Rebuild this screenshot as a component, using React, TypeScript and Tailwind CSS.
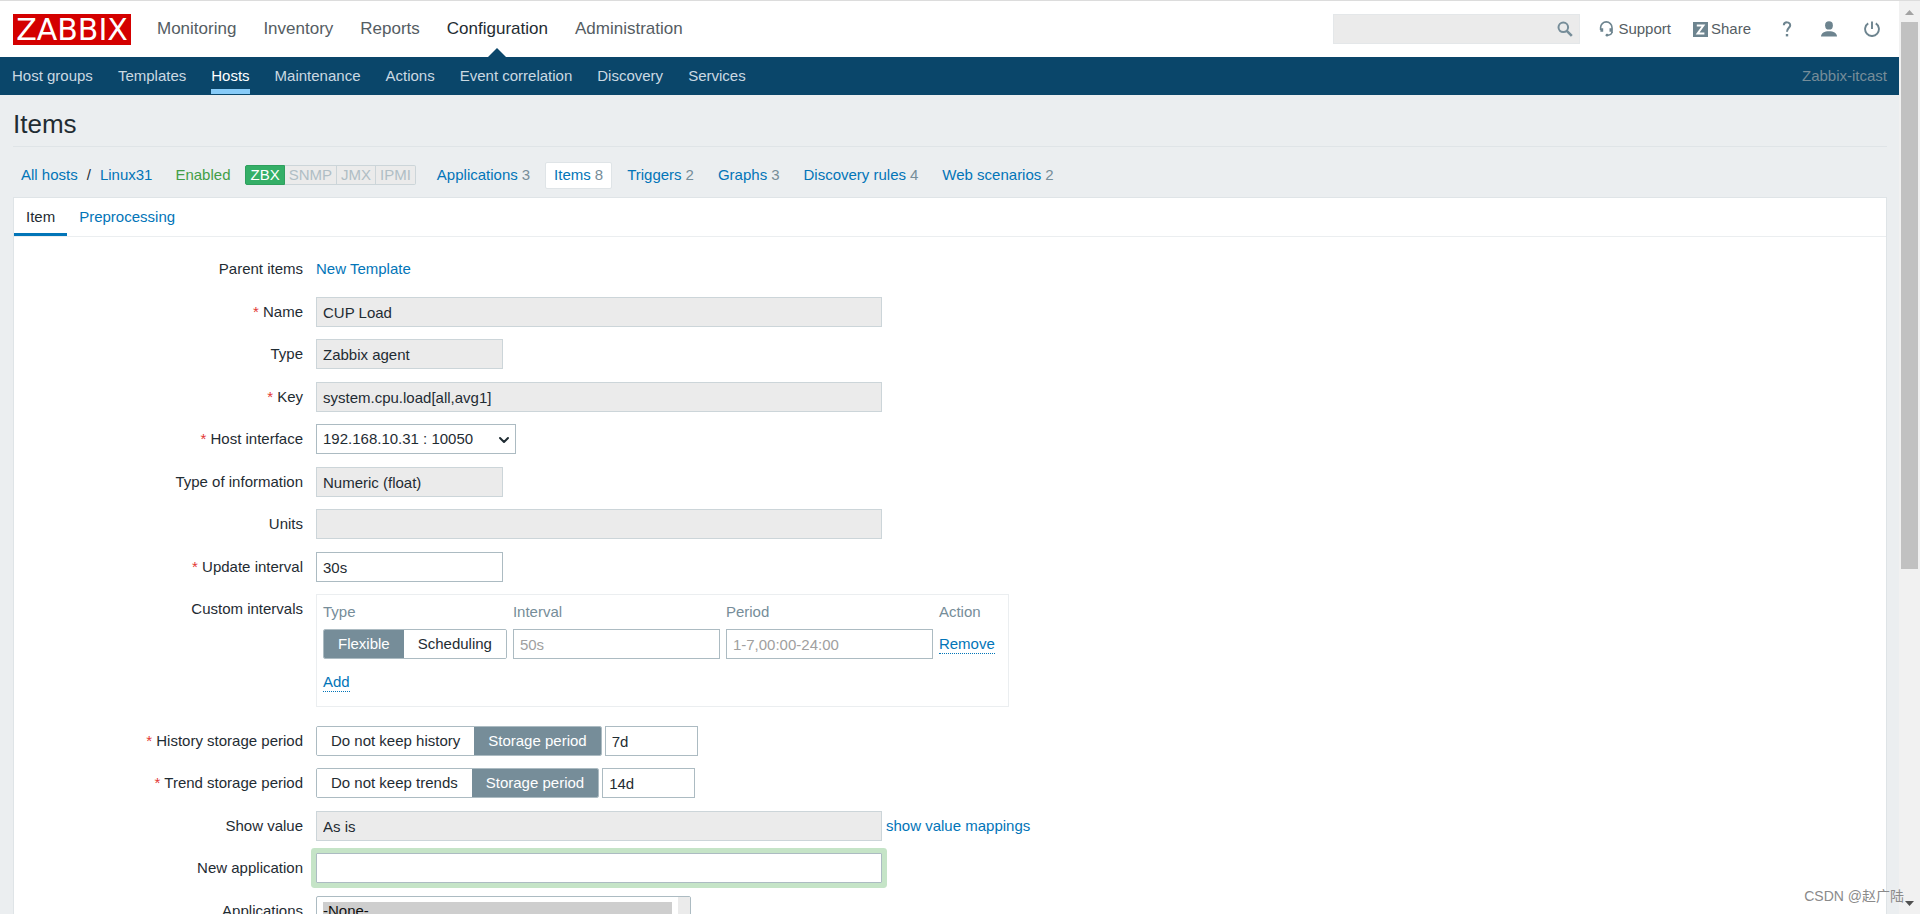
import type { ReactNode } from "react";
import { ChevronDown } from "lucide-react";

const mainNav = ["Monitoring", "Inventory", "Reports", "Configuration", "Administration"];
const subNav = ["Host groups", "Templates", "Hosts", "Maintenance", "Actions", "Event correlation", "Discovery", "Services"];
const hostLinks = [
  { name: "Applications", count: 3 },
  { name: "Items", count: 8 },
  { name: "Triggers", count: 2 },
  { name: "Graphs", count: 3 },
  { name: "Discovery rules", count: 4 },
  { name: "Web scenarios", count: 2 },
];

const inputClass = "h-[30px] border border-[#acbbc2] bg-white px-[6px] placeholder:text-[#a0a0a0] outline-none";
const readonlyClass = "h-[30px] border border-[#ccd5d9] bg-[#ebebeb] px-[6px] outline-none";
const linkClass = "text-[#0275b8]";

function Header() {
  return (
    <header>
      <div className="flex h-[57px] items-center justify-between border-t border-[#dcdcdc] bg-white pr-[19px] pl-[13px]">
        <div className="flex h-full items-center">
          <a href="#" className="flex h-[31px] w-[118px] items-center justify-center bg-[#d40000] font-['DejaVu_Sans',sans-serif] text-[30px] leading-[31px] text-white">
            ZABBIX
          </a>
          <nav className="ml-[26px] flex h-full gap-[27px] text-[17px]">
            {mainNav.map((name) => (
              <a
                key={name}
                href="#"
                className={name === "Configuration" ? "relative flex items-center text-[#1f2c33]" : "flex items-center text-[#555d63]"}
              >
                {name}
                {name === "Configuration" && (
                  <svg className="absolute bottom-0 left-1/2 -ml-[9px]" width="18" height="9" viewBox="0 0 18 9">
                    <path d="M9 0 L18 9 H0 Z" fill="#0a466a" />
                  </svg>
                )}
              </a>
            ))}
          </nav>
        </div>
        <div className="flex items-center text-[15px] text-[#555d63]">
          <form className="flex h-[30px] w-[247px] items-center border border-[#e4e7e9] bg-[#ebebeb]">
            <input aria-label="Search" className="h-full min-w-0 flex-1 bg-transparent px-[6px] outline-none" />
            <button type="button" aria-label="Search" className="mr-[6px]">
              <svg width="16" height="16" viewBox="0 0 16 16" fill="none" stroke="#768d99">
                <circle cx="6.3" cy="6.3" r="4.8" strokeWidth="2" />
                <path d="M9.8 9.8 L14.8 14.8" strokeWidth="2.6" />
              </svg>
            </button>
          </form>
          <a href="#" className="ml-[19px] flex items-center gap-1">
            <svg width="15" height="16" viewBox="0 0 15 16" fill="none" stroke="#6d848f">
              <path d="M1.6 9 V6.6 a5.7 5.7 0 0 1 11.4 0 V12" strokeWidth="1.6" />
              <path d="M2.8 7.2 v3.6 M11.9 7.2 v3.6" strokeWidth="2.8" />
              <path d="M12.9 11 C12.9 13.4 11.5 14 8.6 14.3" strokeWidth="1.5" />
              <circle cx="8" cy="14.2" r="1.4" fill="#6d848f" stroke="none" />
            </svg>
            Support
          </a>
          <a href="#" className="ml-[22px] flex items-center gap-[3px]">
            <svg width="15" height="15" viewBox="0 0 15 15">
              <rect width="15" height="15" fill="#6d848f" />
              <path d="M3.8 3.5 H10.4 L4.6 11.5 H11.4" fill="none" stroke="#fff" strokeWidth="2" />
            </svg>
            Share
          </a>
          <a href="#" aria-label="Help" className="ml-[30px]">
            <svg width="12" height="16" viewBox="0 0 12 16" fill="none" stroke="#6d848f" strokeWidth="2">
              <path d="M2.8 4.2 C3 0.4 9.4 0.4 9.2 4.4 C9.1 6.8 6 7 6 10.8" />
              <path d="M6 13 v2.4" strokeWidth="2.4" />
            </svg>
          </a>
          <a href="#" aria-label="User profile" className="ml-[28px]">
            <svg width="16" height="16" viewBox="0 0 16 16" fill="#6d848f">
              <ellipse cx="8" cy="4.4" rx="3.9" ry="4.2" />
              <path d="M0 15.4 C0.2 12 3.4 10.2 8 10.2 S15.8 12 16 15.4 Z" />
            </svg>
          </a>
          <a href="#" aria-label="Sign out" className="ml-[27px]">
            <svg width="16" height="16" viewBox="0 0 16 16" fill="none" stroke="#6d848f" strokeWidth="1.9">
              <path d="M4.2 2.4 A6.9 6.9 0 1 0 11.8 2.4" />
              <path d="M8 0.4 V8" />
            </svg>
          </a>
        </div>
      </div>
      <div className="flex h-[38px] justify-between bg-[#0a466a] px-3">
        <nav className="flex gap-[25px]">
          {subNav.map((name) => (
            <a
              key={name}
              href="#"
              className={
                name === "Hosts"
                  ? "relative flex items-center text-white"
                  : "flex items-center text-[#cbd9e2]"
              }
            >
              {name}
              {name === "Hosts" && <span className="absolute inset-x-0 bottom-px h-[5px] bg-[#87cbf8]" />}
            </a>
          ))}
        </nav>
        <span className="flex items-center text-[#768d99]">Zabbix-itcast</span>
      </div>
    </header>
  );
}

function HostBar() {
  return (
    <div className="flex h-[50px] items-center pt-[6px] pl-2">
      <a href="#" className={linkClass}>All hosts</a>
      <span className="mx-[9px]">/</span>
      <a href="#" className={linkClass}>Linux31</a>
      <span className="ml-[23px] text-[#429e47]">Enabled</span>
      <div className="ml-[15px] flex h-5 leading-[18px] text-[#b0bec5]">
        <span className="rounded-l-xs border border-[#2f9f5e] bg-[#34af67] px-1 text-white">ZBX</span>
        <span className="border-y border-r border-[#ccd5d9] bg-[#ebebeb] px-1">SNMP</span>
        <span className="border-y border-r border-[#ccd5d9] bg-[#ebebeb] px-1">JMX</span>
        <span className="rounded-r-xs border-y border-r border-[#ccd5d9] bg-[#ebebeb] px-1">IPMI</span>
      </div>
      <nav className="ml-3 flex gap-[6px]">
        {hostLinks.map((link) => (
          <a
            key={link.name}
            href="#"
            className={
              link.name === "Items"
                ? "flex h-[27px] items-center gap-1 rounded-xs border border-[#dfe4e7] bg-white px-2 text-[#0275b8]"
                : "flex h-[27px] items-center gap-1 border border-transparent px-2 text-[#0275b8]"
            }
          >
            {link.name} <span className="text-[#768d99]">{link.count}</span>
          </a>
        ))}
      </nav>
    </div>
  );
}

type RowProps = {
  label: string;
  htmlFor?: string;
  required?: boolean;
  children: ReactNode;
};

function Row({ label, htmlFor, required, children }: RowProps) {
  return (
    <li className="flex pt-3 even:pt-[13px]">
      <label htmlFor={htmlFor} className="mr-[13px] w-[289px] shrink-0 text-right leading-[29px]">
        {required && <span className="text-[#e33734]">* </span>}
        {label}
      </label>
      <div className="flex min-w-0 items-center">{children}</div>
    </li>
  );
}

type SegmentedProps = { options: string[]; selected: string };

function Segmented({ options, selected }: SegmentedProps) {
  return (
    <div className="flex h-[30px] overflow-hidden rounded-xs border border-[#acbbc2]">
      {options.map((option) => (
        <button
          key={option}
          type="button"
          aria-pressed={option === selected}
          className={option === selected ? "bg-[#768d99] px-[14px] text-white" : "bg-white px-[14px]"}
        >
          {option}
        </button>
      ))}
    </div>
  );
}

function CustomIntervals() {
  return (
    <div className="mb-[6px] h-[113px] border border-[#ebeef0] pt-1 pr-[13px] pl-[6px]">
      <table>
        <thead>
          <tr className="h-[30px] text-left text-[#768d99]">
            <th className="pb-[3px] font-normal">Type</th>
            <th className="pb-[3px] font-normal">Interval</th>
            <th className="pb-[3px] font-normal">Period</th>
            <th className="pb-[3px] font-normal">Action</th>
          </tr>
        </thead>
        <tbody>
          <tr>
            <td className="pr-[6px]">
              <Segmented options={["Flexible", "Scheduling"]} selected="Flexible" />
            </td>
            <td className="pr-[6px]">
              <input aria-label="Interval" placeholder="50s" className={`${inputClass} block w-[207px]`} />
            </td>
            <td className="pr-[6px]">
              <input aria-label="Period" placeholder="1-7,00:00-24:00" className={`${inputClass} block w-[207px]`} />
            </td>
            <td>
              <button type="button" className="block border-b border-dotted border-[#0275b8] leading-[18px] text-[#0275b8]">Remove</button>
            </td>
          </tr>
        </tbody>
      </table>
      <button type="button" className="mt-[14px] block border-b border-dotted border-[#0275b8] leading-[18px] text-[#0275b8]">Add</button>
    </div>
  );
}

function ItemForm() {
  return (
    <form>
      <ul className="pt-[5px]">
        <Row label="Parent items">
          <a href="#" className={`${linkClass} leading-[30px]`}>New Template</a>
        </Row>
        <Row label="Name" htmlFor="name" required>
          <input id="name" readOnly defaultValue="CUP Load" className={`${readonlyClass} w-[566px]`} />
        </Row>
        <Row label="Type" htmlFor="type">
          <input id="type" readOnly defaultValue="Zabbix agent" className={`${readonlyClass} w-[187px]`} />
        </Row>
        <Row label="Key" htmlFor="key" required>
          <input id="key" readOnly defaultValue="system.cpu.load[all,avg1]" className={`${readonlyClass} w-[566px]`} />
        </Row>
        <Row label="Host interface" htmlFor="interface" required>
          <div className="relative">
            <select id="interface" className={`${inputClass} block w-[200px] appearance-none`}>
              <option>192.168.10.31 : 10050</option>
            </select>
            <ChevronDown className="pointer-events-none absolute top-2 right-1 size-4" strokeWidth={3} />
          </div>
        </Row>
        <Row label="Type of information" htmlFor="value-type">
          <input id="value-type" readOnly defaultValue="Numeric (float)" className={`${readonlyClass} w-[187px]`} />
        </Row>
        <Row label="Units" htmlFor="units">
          <input id="units" readOnly className={`${readonlyClass} w-[566px]`} />
        </Row>
        <Row label="Update interval" htmlFor="delay" required>
          <input id="delay" defaultValue="30s" className={`${inputClass} w-[187px]`} />
        </Row>
        <Row label="Custom intervals">
          <CustomIntervals />
        </Row>
        <Row label="History storage period" htmlFor="history" required>
          <Segmented options={["Do not keep history", "Storage period"]} selected="Storage period" />
          <input id="history" defaultValue="7d" className={`${inputClass} ml-[3px] w-[93px]`} />
        </Row>
        <Row label="Trend storage period" htmlFor="trends" required>
          <Segmented options={["Do not keep trends", "Storage period"]} selected="Storage period" />
          <input id="trends" defaultValue="14d" className={`${inputClass} ml-[3px] w-[93px]`} />
        </Row>
        <Row label="Show value" htmlFor="valuemap">
          <input id="valuemap" readOnly defaultValue="As is" className={`${readonlyClass} w-[566px]`} />
          <a href="#" className={`${linkClass} ml-1`}>show value mappings</a>
        </Row>
        <Row label="New application" htmlFor="new-application">
          <input id="new-application" className={`${inputClass} w-[566px] rounded-[1px] ring-5 ring-[#c5e4c7]`} />
        </Row>
        <Row label="Applications" htmlFor="applications">
          <div className="flex w-[375px] overflow-hidden rounded-xs border border-[#acbbc2] bg-white">
            <select id="applications" multiple size={6} defaultValue={["none"]} className="my-[5px] mr-[6px] ml-[6px] min-w-0 flex-1 outline-none [&>option]:p-0">
              <option value="none">-None-</option>
            </select>
            <div className="w-3 bg-[#ebebeb]" />
          </div>
        </Row>
      </ul>
    </form>
  );
}

function ScrollBar() {
  return (
    <div className="flex w-[21px] shrink-0 flex-col items-center border-t border-[#dcdcdc] bg-[#f1f1f1]">
      <svg className="mt-[9px] mb-[7px] shrink-0" width="9" height="5" viewBox="0 0 9 5">
        <path d="M4.5 0 L9 5 H0 Z" fill="#a3a3a3" />
      </svg>
      <div className="w-full flex-1">
        <div className="mx-auto h-5/8 w-[17px] bg-[#c1c1c1]" />
      </div>
      <svg className="mt-1 mb-2 shrink-0" width="9" height="5" viewBox="0 0 9 5">
        <path d="M0 0 H9 L4.5 5 Z" fill="#505050" />
      </svg>
    </div>
  );
}

export default function App() {
  return (
    <div className="relative flex h-screen overflow-hidden bg-[#ebeef0] font-['Liberation_Sans',Arial,sans-serif] text-[15px] text-[#1f2c33]">
      <div className="min-w-0 flex-1 overflow-hidden">
        <Header />
        <main className="pr-3 pl-[13px]">
          <h1 className="h-[52px] border-b border-[#dfe4e7] pt-3 text-[26px] leading-[34px]">Items</h1>
          <HostBar />
          <section className="border border-[#dfe4e7] bg-white pb-10">
            <nav className="flex h-[39px] border-b border-[#ebeef0]">
              <a href="#" className="flex items-center border-b-3 border-[#0275b8] px-3 pt-[3px]">Item</a>
              <a href="#" className={`${linkClass} flex items-center border-b-3 border-transparent px-3 pt-[3px]`}>Preprocessing</a>
            </nav>
            <ItemForm />
          </section>
        </main>
      </div>
      <ScrollBar />
      <span className="absolute right-4 bottom-[9px] font-['Liberation_Sans','Noto_Sans_CJK_SC',sans-serif] text-[14px] leading-[18px] text-[#8a8a8a]">
        CSDN @赵广陆
      </span>
    </div>
  );
}
